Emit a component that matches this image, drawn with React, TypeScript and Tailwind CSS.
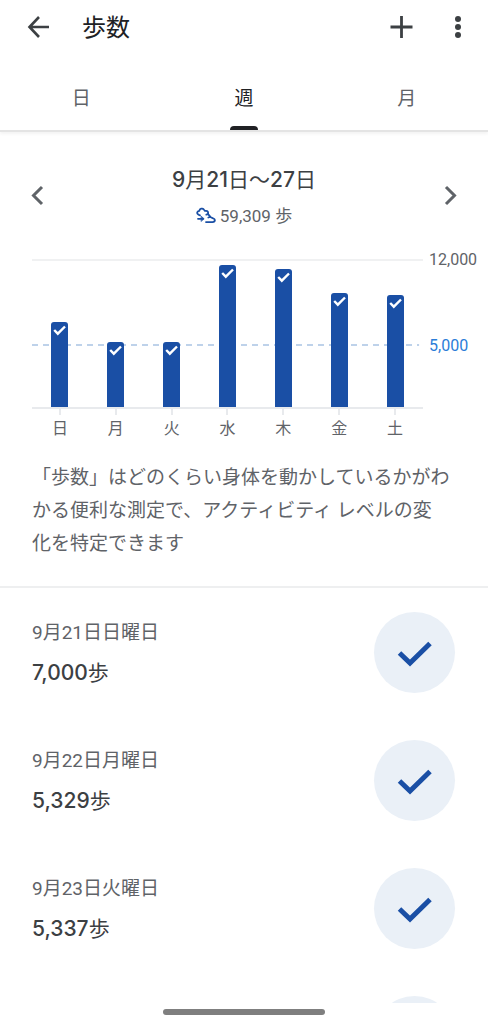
import type { ReactNode } from "react";

type Day = { label: string; title: string; steps: number };

const GOAL = 5000;
const CHART_MAX = 12000;

const days: Day[] = [
  { label: "日", title: "9月21日日曜日", steps: 7000 },
  { label: "月", title: "9月22日月曜日", steps: 5329 },
  { label: "火", title: "9月23日火曜日", steps: 5337 },
  { label: "水", title: "9月24日水曜日", steps: 11680 },
  { label: "木", title: "9月25日木曜日", steps: 11350 },
  { label: "金", title: "9月26日金曜日", steps: 9390 },
  { label: "土", title: "9月27日土曜日", steps: 9223 },
];

const tabs = ["日", "週", "月"];

const toPercent = (steps: number) => `${(steps / CHART_MAX) * 100}%`;

function IconButton({ label, children }: { label: string; children: ReactNode }) {
  return (
    <button type="button" aria-label={label} className="flex size-8 items-center justify-center">
      {children}
    </button>
  );
}

// Numerals are medium weight, the kanji around them stay regular
function Figures({ text }: { text: string }) {
  return text.split(/([\d,]+)/).map((part, i) =>
    i % 2 ? (
      <span key={i} className="font-[Inter,sans-serif] font-medium">
        {part}
      </span>
    ) : (
      part
    ),
  );
}

function Header() {
  return (
    <header className="flex h-[54px] items-center pr-3.5 pl-5.5 text-[#3c4043]">
      <IconButton label="戻る">
        <svg className="size-8" viewBox="0 0 32 32" fill="none" stroke="currentColor" strokeWidth="2.6">
          <path d="M27 16H7.500M17 6 7.500 16 17 26" />
        </svg>
      </IconButton>
      <h1 className="ml-7 flex-1 pt-0.5 text-2xl text-[#202124]">歩数</h1>
      <IconButton label="追加">
        <svg className="size-8" viewBox="0 0 32 32" fill="none" stroke="currentColor" strokeWidth="2.8">
          <path d="M15.500 5v22M4.500 16h22" />
        </svg>
      </IconButton>
      <div className="ml-6">
        <IconButton label="その他">
          <svg className="size-8" viewBox="0 0 32 32" fill="currentColor">
            <circle cx="16" cy="8" r="3" />
            <circle cx="16" cy="16" r="3" />
            <circle cx="16" cy="24" r="3" />
          </svg>
        </IconButton>
      </div>
    </header>
  );
}

function Tabs({ active }: { active: string }) {
  return (
    <nav className="grid h-[78px] shrink-0 grid-cols-3 border-b-2 border-[#e4e4e4] shadow-[0_2px_3px_rgba(0,0,0,0.05)]">
      {tabs.map((tab) => (
        <button
          key={tab}
          type="button"
          className={`relative pt-3.5 text-[19px] ${tab === active ? "text-[#202124]" : "text-[#5f6368]"}`}
        >
          {tab}
          {tab === active && (
            <span className="absolute bottom-0 left-1/2 h-1 w-7 -translate-x-1/2 rounded-t-full bg-[#202124]" />
          )}
        </button>
      ))}
    </nav>
  );
}

function ShoeIcon() {
  return (
    <svg
      className="size-5"
      viewBox="0 0 20 20"
      fill="none"
      stroke="#1a4fa5"
      strokeWidth="1.8"
      strokeLinejoin="round"
      strokeLinecap="round"
    >
      <path d="M4 9.300C1.800 8.800.9 7.500 1.300 6.200c.3-1 1.200-1.200 2-1.400C3.600 2.500 6.600 1.800 7.800 3.500L9 5c1.600-.5 3.100.2 3.100 1.700V8.200l2.500 3c1.300 1.200 4.300.9 4.300 2.900 0 1.400-.8 2-2.400 2H10" />
      <path d="M10.300 8.700 12 8.200M12.300 11.500l2-.6M2 12.800h5" />
      <path d="m5.300 10.300 2.900 2.500-2.900 2.500z" fill="#1a4fa5" strokeWidth=".6" />
    </svg>
  );
}

function WeekPicker() {
  return (
    <div className="flex items-center justify-between px-5.5 text-[#5f6368]">
      <IconButton label="前の週">
        <svg className="size-8" viewBox="0 0 32 32" fill="none" stroke="currentColor" strokeWidth="3">
          <path d="M20 7 11.500 15.500 20 24" />
        </svg>
      </IconButton>
      <div className="flex flex-col items-center">
        <h2 className="text-[21px] leading-8 text-[#3c4043]">
          <Figures text="9月21日～27日" />
        </h2>
        <p className="mt-2 flex items-center gap-1 text-[17px] leading-6">
          <ShoeIcon />
          59,309 歩
        </p>
      </div>
      <IconButton label="次の週">
        <svg className="size-8" viewBox="0 0 32 32" fill="none" stroke="currentColor" strokeWidth="3">
          <path d="M12 7 20.500 15.500 12 24" />
        </svg>
      </IconButton>
    </div>
  );
}

function Chart() {
  return (
    <div className="mt-[31px] flex pl-8 text-base text-[#5f6368]">
      <div className="flex-1">
        <div className="relative h-[148px] border-t-2 border-[#f0f1f2]">
          <svg className="absolute left-0 h-0.5 w-full" style={{ bottom: toPercent(GOAL) }}>
            <line x1="0" y1="1" x2="99%" y2="1" stroke="#a9c3e3" strokeWidth="1.6" strokeDasharray="6 5" />
          </svg>
          <div className="relative grid h-full grid-cols-7">
            {days.map((day) => (
              <div key={day.label} className="flex items-end justify-center">
                <div
                  className="flex w-[17px] justify-center rounded-t-[3px] bg-[#1a4fa5] pt-0.5"
                  style={{ height: toPercent(day.steps) }}
                >
                  <svg className="h-3 w-[13px]" viewBox="0 0 13 12" fill="none" stroke="#fff" strokeWidth="2.4">
                    <path d="m1.200 6 3.600 3.700L12 2.500" />
                  </svg>
                </div>
              </div>
            ))}
          </div>
        </div>
        <div className="grid grid-cols-7 border-t-2 border-[#e8eaed]">
          {days.map((day) => (
            <div key={day.label} className="flex flex-col items-center">
              <span className="h-1.5 w-0.5 bg-[#e8eaed]" />
              <span className="leading-7">{day.label}</span>
            </div>
          ))}
        </div>
      </div>
      <div className="relative w-[65px]">
        <span className="absolute -top-[11px] left-1.5 leading-6">12,000</span>
        <span className="absolute top-[75px] left-1.5 leading-6 text-[#2b7dd8]">5,000</span>
      </div>
    </div>
  );
}

function DayRow({ day }: { day: Day }) {
  return (
    <li className="flex items-center justify-between pb-[47px]">
      <div className="pl-8">
        <p className="text-[19px] leading-8 text-[#5f6368]">{day.title}</p>
        <p className="mt-2 text-[21px] leading-8 text-[#3c4043]">
          <Figures text={`${day.steps.toLocaleString("en-US")}歩`} />
        </p>
      </div>
      <span className="mr-[33px] flex size-[81px] items-center justify-center rounded-full bg-[#eaf0f7]">
        <svg className="h-8 w-10" viewBox="0 0 40 32" fill="none" stroke="#1a4fa5" strokeWidth="5">
          <path d="m4.500 16 10.500 10L35 6.500" />
        </svg>
      </span>
    </li>
  );
}

export default function App() {
  return (
    <div className="flex h-screen flex-col bg-white font-[Roboto,'Noto_Sans_CJK_JP',sans-serif]" lang="ja">
      <Header />
      <Tabs active="週" />
      <main className="min-h-0 flex-1 overflow-y-auto pt-8 [scrollbar-width:none]">
        <WeekPicker />
        <Chart />
        <p className="mt-4.5 px-8 text-[19px] leading-[33px] text-[#5f6368]">
          「歩数」はどのくらい身体を動かしているかがわかる便利な測定で、アクティビティ レベルの変
          <br />
          化を特定できます
        </p>
        <ul className="mt-6.5 border-t-2 border-[#eeeff0] pt-6">
          {days.map((day) => (
            <DayRow key={day.title} day={day} />
          ))}
        </ul>
      </main>
      <footer className="flex h-[21px] shrink-0 justify-center pt-1.5">
        <span className="h-1.5 w-1/3 rounded-full bg-[#7f7f7f]" />
      </footer>
    </div>
  );
}
